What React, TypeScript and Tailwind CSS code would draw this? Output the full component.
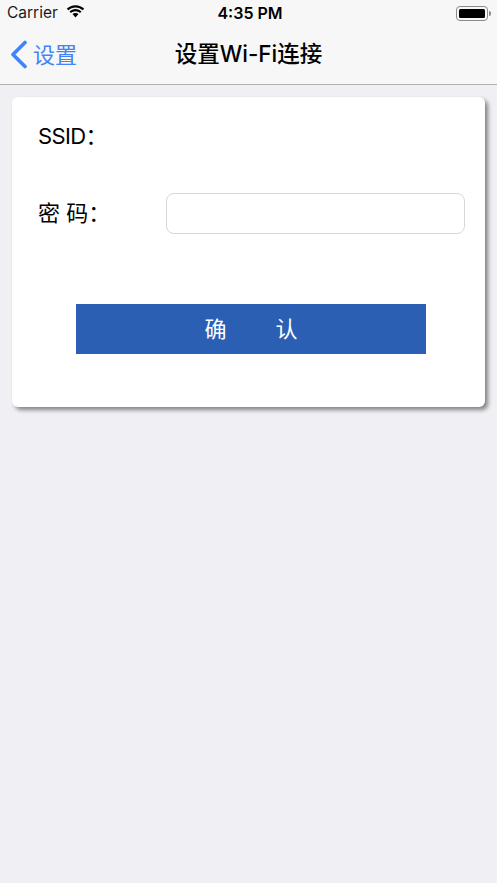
export default function App() {
  const cjk = { fontFamily: '"Inter", "Noto Sans CJK SC", sans-serif' };
  return (
    <div className="w-[497px] h-[883px] bg-[#efeff4] flex flex-col overflow-hidden" style={cjk}>
      <header className="h-[85px] bg-[#f7f7f7] border-b border-[#b2b2b2] flex flex-col shrink-0">
        <div className="h-[26px] relative flex items-center justify-between pl-[7px] pr-[6.500px] text-black">
          <div className="flex items-center gap-[8px]">
            <span className="text-[15.500px] text-[#1a1a1a] leading-none">Carrier</span>
            <svg width="19" height="14" viewBox="0 0 19 14" fill="currentColor" className="mb-[3px]">
              <path d="M9.500 2.400c2.800 0 5.300 1.100 7.200 2.900l1.500-1.600C15.900 1.500 12.900 .2 9.500 .2S3.100 1.500 .8 3.700l1.500 1.600C4.200 3.500 6.700 2.400 9.500 2.400z" />
              <path d="M9.500 6.200c1.700 0 3.300 .7 4.500 1.800l1.500-1.600C13.900 4.900 11.800 4 9.500 4S5.100 4.900 3.500 6.400L5 8c1.200-1.100 2.800-1.800 4.500-1.800z" />
              <path d="M9.500 7.900c-1.200 0-2.200 .4-3 1.200l3 3.300 3-3.300c-.8-.8-1.800-1.200-3-1.200z" />
            </svg>
          </div>
          <span className="absolute left-0 right-0 pl-[3px] text-center text-[16px] font-semibold leading-none">4:35 PM</span>
          <div className="flex items-center gap-[1px]">
            <div className="w-[32px] h-[15px] rounded-[4px] border border-[#8a8a8a] p-[2px]">
              <div className="w-full h-full bg-black rounded-[1.500px]" />
            </div>
            <div className="w-[1.500px] h-[5px] bg-[#8a8a8a] rounded-r-sm" />
          </div>
        </div>
        <div className="flex-1 relative flex items-center justify-center">
          <div className="absolute left-[10px] top-[14px] flex items-center gap-[5px]">
            <svg width="18" height="29" viewBox="0 0 18 29" fill="none" stroke="#3f84f8" strokeWidth="3.600" strokeLinecap="round" strokeLinejoin="round">
              <path d="M15 2.500 L3 14.500 L15 26.500" />
            </svg>
            <span className="text-[22px] leading-none text-[#4285f4]">设置</span>
          </div>
          <h1 className="text-[22.500px] font-medium text-black leading-none mb-[1px]">设置Wi-Fi连接</h1>
        </div>
      </header>
      <main className="px-[12px] pt-[12px]">
        <section className="w-[473px] h-[310px] bg-white rounded-[6px] shadow-[3px_3px_4px_rgba(0,0,0,0.45)] pl-[27px] pr-[20px] pt-[26px] flex flex-col">
          <div className="h-[26px] -ml-[1px] flex items-center text-[22px] tracking-[-0.600px] text-black leading-none">SSID：</div>
          <div className="mt-[44px] h-[41px] flex items-center">
            <label className="w-[127px] -ml-[1px] mr-[1px] text-[22px] text-black leading-none mb-[1px]">密 码：</label>
            <input className="w-[299px] h-[41px] rounded-[8px] border border-[#d8d8d8] bg-white" />
          </div>
          <button className="mt-[70px] ml-[37px] w-[350px] h-[50px] bg-[#2b5fb3] text-white text-[22px] leading-none flex items-center justify-center gap-[49px]">
            <span>确</span>
            <span>认</span>
          </button>
        </section>
      </main>
    </div>
  );
}
